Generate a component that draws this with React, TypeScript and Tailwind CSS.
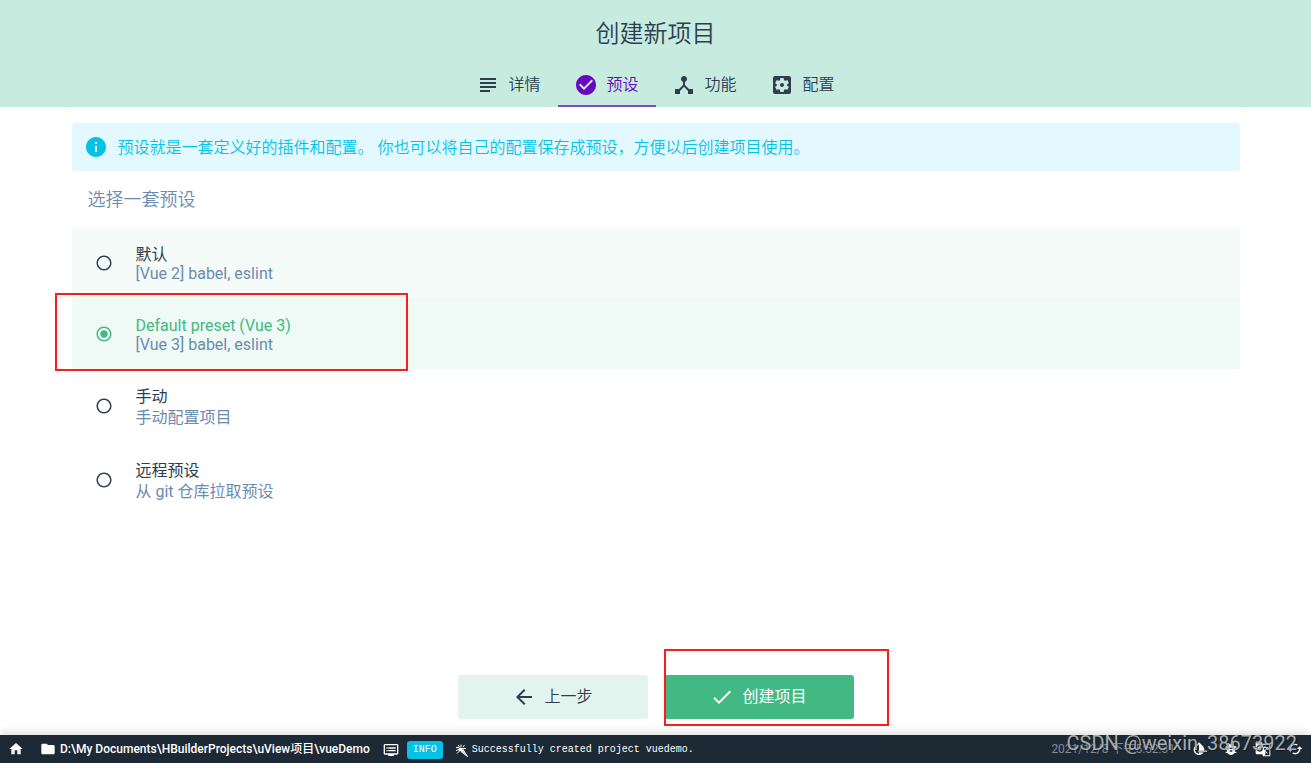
import { useState } from 'react';
import {
  MdArrowBack,
  MdBugReport,
  MdCached,
  MdCheckCircle,
  MdDeviceHub,
  MdDone,
  MdDvr,
  MdFolder,
  MdGTranslate,
  MdHome,
  MdInfo,
  MdInvertColors,
  MdRadioButtonChecked,
  MdRadioButtonUnchecked,
  MdSettingsApplications,
  MdSubject,
} from 'react-icons/md';

const tabs = [
  { id: 'details', label: '详情', icon: MdSubject },
  { id: 'presets', label: '预设', icon: MdCheckCircle },
  { id: 'features', label: '功能', icon: MdDeviceHub },
  { id: 'config', label: '配置', icon: MdSettingsApplications },
];

const presets = [
  { id: 'default', name: '默认', description: '[Vue 2] babel, eslint', row: 'h-[71px] leading-[19px] bg-[#f5fbf9]' },
  { id: 'vue3', name: 'Default preset (Vue 3)', description: '[Vue 3] babel, eslint', row: 'h-[71px] leading-[19px]', marked: true },
  { id: 'manual', name: '手动', description: '手动配置项目', row: 'h-[74px] leading-[21px]' },
  { id: 'remote', name: '远程预设', description: '从 git 仓库拉取预设', row: 'h-[74px] leading-[21px]' },
];

function Header() {
  const [activeTab, setActiveTab] = useState('presets');

  return (
    <header className="bg-[#c8ebdf]">
      <h1 className="flex h-[67px] items-center justify-center text-2xl font-[350]">创建新项目</h1>
      <nav className="flex justify-center">
        {tabs.map(tab => (
          <button
            key={tab.id}
            onClick={() => setActiveTab(tab.id)}
            className={`flex h-10 w-[98px] items-center justify-center gap-2 border-b-2 pb-0.5 font-[350] ${
              activeTab === tab.id ? 'border-[#7f4bc8] text-[#6806c1]' : 'border-transparent'
            }`}
          >
            <tab.icon size={24} />
            <span>{tab.label}</span>
          </button>
        ))}
      </nav>
    </header>
  );
}

function PresetList() {
  const [selected, setSelected] = useState('vue3');

  return (
    <div>
      {presets.map(preset => {
        const active = selected === preset.id;
        const Radio = active ? MdRadioButtonChecked : MdRadioButtonUnchecked;
        return (
          <label
            key={preset.id}
            className={`relative flex items-center gap-[23px] px-[23px] ${preset.row} ${active ? 'bg-[#eff9f5]' : ''}`}
          >
            <span className="grid">
              <input
                type="radio"
                name="preset"
                checked={active}
                onChange={() => setSelected(preset.id)}
                className="col-start-1 row-start-1 size-[18px] appearance-none"
              />
              <Radio
                size={18}
                className={`pointer-events-none col-start-1 row-start-1 ${active ? 'text-[#42b983]' : ''}`}
              />
            </span>
            <span className="flex flex-col pt-0.5">
              <span className={active ? 'text-[#42b983]' : ''}>{preset.name}</span>
              <span className="text-[#6b8bb0]">{preset.description}</span>
            </span>
            {preset.marked && (
              <span className="pointer-events-none absolute -top-[5px] -left-[17px] z-10 h-[78px] w-[353px] border-2 border-[#fb1c1c]" />
            )}
          </label>
        );
      })}
    </div>
  );
}

// Party popper shown in front of the last log line
function Popper() {
  return (
    <svg width="13" height="13" viewBox="0 0 13 13" fill="none" stroke="currentColor">
      <path d="M6 7.5 8 5.5 12.5 12.5Z" fill="#c9d3e6" />
      <path d="M1 3.5h3M3 1l2 2.5M6 .5v3M9.5 1 8 3M1 6.5l3-1M2 9.5 4.5 7M7 4.500h4" />
      <path d="M4 4.5h3v2H4z" fill="currentColor" />
    </svg>
  );
}

function StatusBar() {
  return (
    <footer className="relative flex h-7 items-center bg-[#1d2935] px-2 text-xs text-white shadow-[0_-2px_10px_rgba(0,0,0,0.15)]">
      <button aria-label="home" className="mr-4">
        <MdHome size={16} />
      </button>
      <button className="mr-[13px] flex items-center gap-1 font-medium">
        <MdFolder size={16} />
        <span>D:\My Documents\HBuilderProjects\uView项目\vueDemo</span>
      </button>
      <button className="flex items-center pt-0.5 font-['Liberation_Mono',monospace] text-[10px] leading-[18px]">
        <MdDvr size={16} />
        <span className="mr-3 ml-2 rounded-[3px] bg-[#03c2e6] px-1.5">INFO</span>
        <Popper />
        <span className="ml-1">Successfully created project vuedemo.</span>
      </button>
      <span className="ml-auto pr-4 text-[#858c93]">2021/12/8 下午5:52:31</span>
      <div className="flex gap-4">
        <button aria-label="theme"><MdInvertColors size={16} /></button>
        <button aria-label="report"><MdBugReport size={16} /></button>
        <button aria-label="language"><MdGTranslate size={16} /></button>
        <button aria-label="reload"><MdCached size={16} /></button>
      </div>
      <span className="pointer-events-none absolute right-3.5 bottom-1.5 text-xl text-[#a9adb1] [text-shadow:1px_1px_1px_#00000060]">
        CSDN @weixin_38673922
      </span>
    </footer>
  );
}

export default function App() {
  return (
    <div className="flex min-h-screen flex-col bg-white font-[Roboto,'Noto_Sans_CJK_SC',sans-serif] text-base text-[#2c3e50]">
      <Header />
      <main className="mx-auto w-full max-w-[1200px] flex-1 px-4 pt-4">
        <div className="flex h-12 items-center gap-2.5 rounded-[3px] bg-[#e3f9ff] px-3 text-[#03c2e6]">
          <MdInfo size={24} />
          <p className="pt-0.5 font-[350]">
            预设就是一套定义好的插件和配置。 你也可以将自己的配置保存成预设，方便以后创建项目使用。
          </p>
        </div>
        <h2 className="flex h-14 items-center px-4 pt-0.5 text-lg font-[350] text-[#6b8bb0]">选择一套预设</h2>
        <PresetList />
      </main>
      <div className="flex justify-center gap-4 py-4">
        <button className="flex h-11 w-[190px] items-center justify-center gap-2 rounded-[3px] bg-[#e3f4ee]">
          <MdArrowBack size={24} />
          <span className="font-[350]">上一步</span>
        </button>
        <div className="relative">
          <button className="flex h-11 w-[190px] items-center justify-center gap-2 rounded-[3px] bg-[#42b983] text-white">
            <MdDone size={24} />
            <span>创建项目</span>
          </button>
          <span className="pointer-events-none absolute -top-[26px] left-0 h-[77px] w-[225px] border-2 border-[#fb1c1c]" />
        </div>
      </div>
      <StatusBar />
    </div>
  );
}
